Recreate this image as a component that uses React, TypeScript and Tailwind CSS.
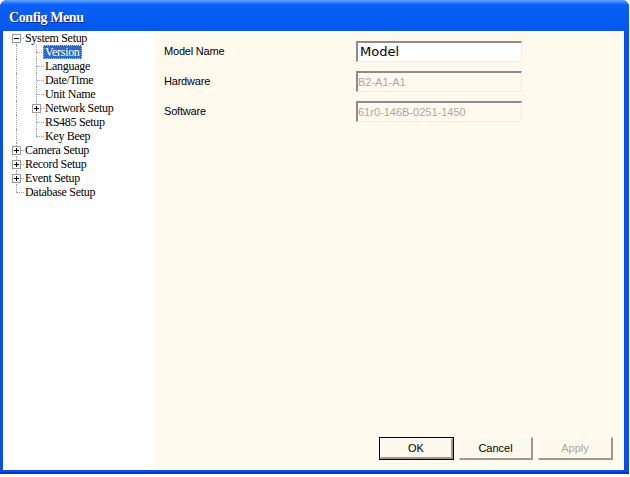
type TreeRow = {
  label: string;
  depth: number;
  guides: boolean[];
  first?: boolean;
  last?: boolean;
  expander?: "+" | "-";
  selected?: boolean;
};

const rows: TreeRow[] = [
  { label: "System Setup", depth: 0, guides: [], first: true, expander: "-" },
  { label: "Version", depth: 1, guides: [true], selected: true },
  { label: "Language", depth: 1, guides: [true] },
  { label: "Date/Time", depth: 1, guides: [true] },
  { label: "Unit Name", depth: 1, guides: [true] },
  { label: "Network Setup", depth: 1, guides: [true], expander: "+" },
  { label: "RS485 Setup", depth: 1, guides: [true] },
  { label: "Key Beep", depth: 1, guides: [true], last: true },
  { label: "Camera Setup", depth: 0, guides: [], expander: "+" },
  { label: "Record Setup", depth: 0, guides: [], expander: "+" },
  { label: "Event Setup", depth: 0, guides: [], expander: "+" },
  { label: "Database Setup", depth: 0, guides: [], last: true },
];

const fields = [
  { label: "Model Name", value: "Model", active: true },
  { label: "Hardware", value: "B2-A1-A1" },
  { label: "Software", value: "61r0-146B-0251-1450" },
];

function Expander({ sign }: { sign: "+" | "-" }) {
  return (
    <span className="absolute left-[9px] top-[3px] w-[9px] h-[9px] border border-[#9a9a9a] bg-white">
      <span className="absolute left-[1px] top-[3px] w-[5px] h-[1px] bg-black" />
      {sign === "+" && <span className="absolute left-[3px] top-[1px] w-[1px] h-[5px] bg-black" />}
    </span>
  );
}

function Row({ row }: { row: TreeRow }) {
  return (
    <div className="flex h-[14px] items-center">
      {row.guides.map((g, i) => (
        <span key={i} className="relative w-[20px] h-[14px] shrink-0">
          {g && <span className="absolute left-[13px] top-0 h-[14px] border-l border-dotted border-[#a0a0a0]" />}
        </span>
      ))}
      <span className="relative w-[20px] h-[14px] shrink-0">
        {!row.first && <span className="absolute left-[13px] top-0 h-[7px] border-l border-dotted border-[#a0a0a0]" />}
        {!row.last && <span className="absolute left-[13px] top-[7px] h-[7px] border-l border-dotted border-[#a0a0a0]" />}
        <span className="absolute left-[13px] top-[7px] w-[8px] border-t border-dotted border-[#a0a0a0]" />
        {row.expander && <Expander sign={row.expander} />}
      </span>
      <span
        className={
          row.selected
            ? "h-[14px] leading-[12px] px-[1px] border border-dotted border-[#e0c878] bg-[#316ac5] text-white whitespace-nowrap"
            : "h-[14px] leading-[14px] px-[2px] text-black whitespace-nowrap"
        }
      >
        {row.label}
      </span>
    </div>
  );
}

function Button({ label, main, disabled, width }: { label: string; main?: boolean; disabled?: boolean; width: string }) {
  return (
    <div className={width + " h-[23px] " + (main ? "border border-black" : "")}>
      <div
        className={
          "h-full flex items-center justify-center border-t border-l border-white border-b-2 border-r-2 border-b-[#9a9890] border-r-[#9a9890] bg-[#fdf8ec] " +
          (disabled ? "text-[#aca899]" : "text-black")
        }
      >
        {label}
      </div>
    </div>
  );
}

export default function App() {
  return (
    <div className="w-[630px] h-[477px] bg-white">
      <div className="w-[629px] h-[474px] flex flex-col rounded-t-[7px] bg-[#0b4fe8] border-b-2 border-[#0634c0] pb-[2px] overflow-hidden">
        <div className="h-[31px] shrink-0 flex items-center pl-[9px] pt-[2px] bg-linear-to-b from-[#4a96ff] from-0% via-[#0a60f7] via-[12%] to-[#0656ec] border-t border-[#5aa0ff]">
          <span className="font-['Liberation_Serif',serif] font-bold text-[14px] tracking-[-0.4px] text-white [text-shadow:1px_1px_0_#0c2a96]">
            Config Menu
          </span>
        </div>
        <div className="flex-1 min-h-0 flex pl-[3px] pr-[5px]">
          <div className="w-[152px] shrink-0 bg-white font-['Liberation_Serif',serif] text-[12px] tracking-[-0.3px]">
            {rows.map((r) => (
              <Row key={r.label} row={r} />
            ))}
          </div>
          <div className="flex-1 flex flex-col bg-[#fff9ee] pl-[9px] pt-[10px] pr-[11px] pb-[10px] font-['Liberation_Sans',Arial,sans-serif] text-[11px]">
            <div className="flex flex-col gap-[9px]">
              {fields.map((f) => (
                <div key={f.label} className="flex items-center h-[21px]">
                  <span className="w-[192px] shrink-0 text-black tracking-[-0.2px]">{f.label}</span>
                  <div
                    className={
                      "w-[166px] h-[21px] flex items-center border-t-2 border-l-2 border-[#8c8c8c] border-b border-r border-b-[#f3eee0] border-r-[#f3eee0] " +
                      (f.active ? "bg-white pl-[2px]" : "bg-[#fff9ee]")
                    }
                  >
                    {f.active ? (
                      <span className="font-['DejaVu_Sans',sans-serif] text-[13px] text-black">{f.value}</span>
                    ) : (
                      <span className="text-[#a8a8a8]">{f.value}</span>
                    )}
                  </div>
                </div>
              ))}
            </div>
            <div className="mt-auto flex justify-end gap-[5px]">
              <Button label="OK" main width="w-[75px]" />
              <Button label="Cancel" width="w-[74px]" />
              <Button label="Apply" disabled width="w-[75px]" />
            </div>
          </div>
        </div>
      </div>
    </div>
  );
}
